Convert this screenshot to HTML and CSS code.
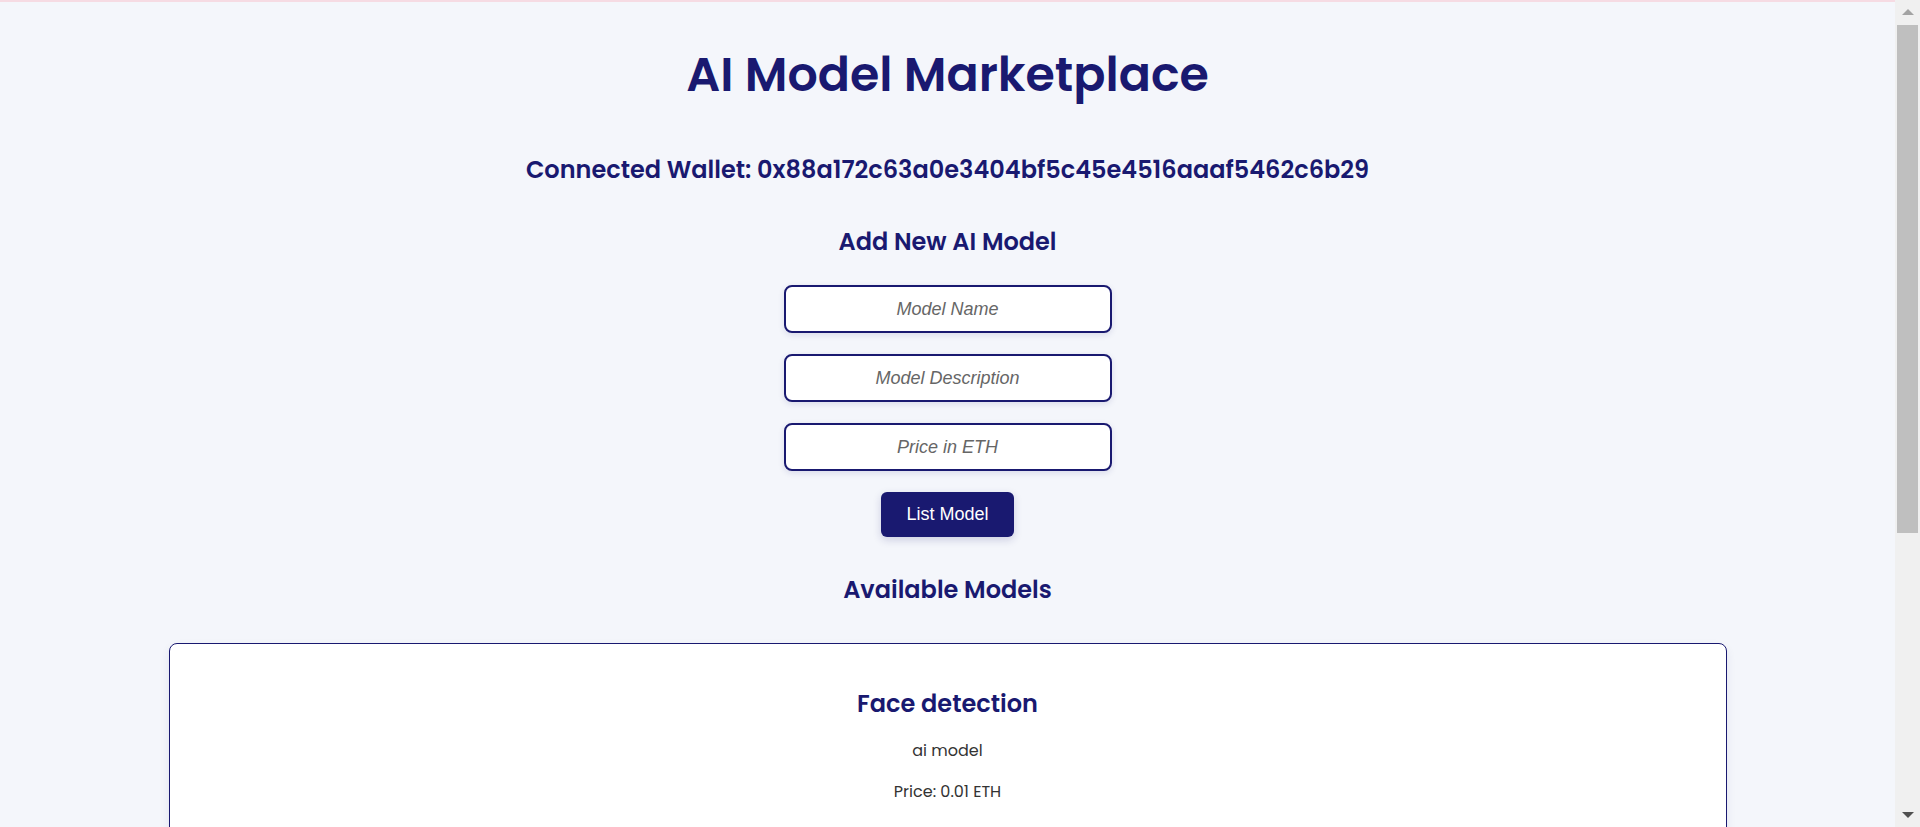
FILE: index.html
```html
<!DOCTYPE html>
<html lang="en">
<head>
<meta charset="utf-8">
<title>AI Model Marketplace</title>
<link rel="stylesheet" href="styles.css">
</head>
<body>
<div class="window">
  <main class="page">
    <div class="app">
      <h1 class="title">AI Model Marketplace</h1>
      <h2 class="wallet">Connected Wallet: 0x88a172c63a0e3404bf5c45e4516aaaf5462c6b29</h2>

      <section class="add">
        <h3 class="section-title">Add New AI Model</h3>
        <form class="add-form">
          <input class="field" type="text" placeholder="Model Name">
          <input class="field" type="text" placeholder="Model Description">
          <input class="field" type="text" placeholder="Price in ETH">
          <button class="btn" type="button">List Model</button>
        </form>
      </section>

      <section class="models">
        <h3 class="section-title">Available Models</h3>
        <div class="model-list">
          <div class="card">
            <h3 class="card-title">Face detection</h3>
            <p class="card-text">ai model</p>
            <p class="card-text">Price: 0.01 ETH</p>
            <button class="btn" type="button">Buy Model</button>
          </div>
        </div>
      </section>
    </div>
  </main>
  <div class="scrollbar" aria-hidden="true">
    <div class="sb-btn"><span class="arrow up"></span></div>
    <div class="sb-track">
      <div class="sb-thumb"></div>
    </div>
    <div class="sb-btn"><span class="arrow down"></span></div>
  </div>
</div>
</body>
</html>
```

FILE: styles.css
```css
html, body {
  margin: 0;
  padding: 0;
  height: 100%;
  overflow: hidden;
}

body {
  background: #f4f6fb;
  font-family: "Poppins", "Inter", "Noto Sans", sans-serif;
  color: #191970;
}

.window {
  display: flex;
  height: 100vh;
}

.page {
  flex: 1;
  min-width: 0;
  overflow: hidden;
  border-top: 2px solid #f6dbe3;
}

/* browser scrollbar, drawn as a column beside the page */
.scrollbar {
  width: 25px;
  flex: 0 0 25px;
  display: flex;
  flex-direction: column;
  background: #f0f0f0;
}

.sb-btn {
  height: 24px;
  display: flex;
  align-items: center;
  justify-content: center;
}

.arrow {
  width: 0;
  height: 0;
  border-left: 6px solid transparent;
  border-right: 6px solid transparent;
}

.arrow.up {
  border-bottom: 6px solid #a3a3a3;
}

.arrow.down {
  border-top: 6px solid #505050;
}

.sb-track {
  flex: 1;
  padding: 1px 2px 0;
}

.sb-thumb {
  height: 508px;
  background: #bfbfbf;
}

.app {
  display: flex;
  flex-direction: column;
  align-items: center;
  text-align: center;
  padding: 41px 0 60px;
}

.title {
  margin: 0;
  font-size: 47.5px;
  line-height: 64px;
  font-weight: 600;
  color: #191970;
}

.wallet {
  margin: 47px 0 0;
  font-size: 24px;
  line-height: 32px;
  font-weight: 600;
  color: #191970;
}

.add {
  display: flex;
  flex-direction: column;
  align-items: center;
}

.section-title {
  margin: 40px 0 0;
  font-size: 24px;
  line-height: 32px;
  font-weight: 600;
  color: #191970;
}

.add-form {
  display: flex;
  flex-direction: column;
  align-items: center;
  gap: 21px;
  margin-top: 27px;
}

.field {
  box-sizing: border-box;
  width: 328px;
  height: 48px;
  border: 2px solid #191970;
  border-radius: 8px;
  background: #fff;
  box-shadow: 0 2px 6px rgba(25, 25, 112, 0.12);
  font-family: "Liberation Sans", Arial, sans-serif;
  font-size: 18px;
  font-style: italic;
  text-align: center;
  color: #333;
  outline: none;
}

.field::placeholder {
  color: #666;
}

.btn {
  box-sizing: border-box;
  height: 45px;
  padding: 0 25px;
  border: none;
  border-radius: 6px;
  background: #191970;
  color: #fff;
  font-family: "Liberation Sans", Arial, sans-serif;
  font-size: 18px;
  box-shadow: 0 3px 8px rgba(25, 25, 112, 0.18);
  cursor: pointer;
}

.add-form .btn {
  margin-top: 0;
}

.models {
  display: flex;
  flex-direction: column;
  align-items: center;
  width: 100%;
}

.models .section-title {
  margin-top: 37px;
}

.model-list {
  display: flex;
  flex-direction: column;
  gap: 30px;
  width: 1558px;
  margin-top: 37px;
}

.card {
  display: flex;
  flex-direction: column;
  align-items: center;
  background: #fff;
  border: 1px solid #191970;
  border-radius: 8px;
  box-shadow: 0 4px 10px rgba(25, 25, 112, 0.08);
  padding: 42px 20px 36px;
}

.card-title {
  margin: 0;
  font-size: 24px;
  line-height: 36px;
  font-weight: 600;
  color: #191970;
}

.card-text {
  margin: 17px 0 0;
  font-size: 16px;
  line-height: 24px;
  color: #333;
}

.card-text + .card-text {
  margin-top: 17px;
}

.card .btn {
  margin-top: 48px;
}
```
